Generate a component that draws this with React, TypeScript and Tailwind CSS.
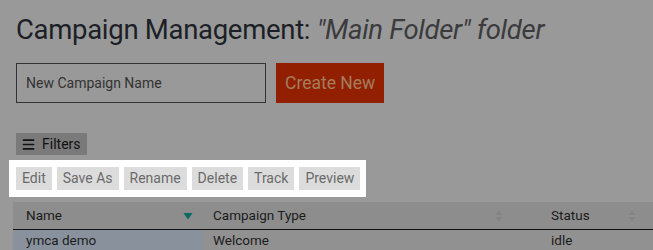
import { Menu } from 'lucide-react';

const actions = ['Edit', 'Save As', 'Rename', 'Delete', 'Track', 'Preview'];

function SortArrows() {
  return (
    <svg width="8" height="14" viewBox="0 0 8 14" className="shrink-0">
      <path d="M4 1 L7.5 6 L0.5 6 Z" fill="#848484" />
      <path d="M4 13 L7.5 8 L0.5 8 Z" fill="#848484" />
    </svg>
  );
}

export default function App() {
  return (
    <div
      className="w-[653px] h-[250px] overflow-hidden bg-[#999999] text-[#1c1f26]"
      style={{ fontFamily: 'Roboto, "Liberation Sans", sans-serif' }}
    >
      <h1 className="pl-4 pt-[13px] text-[27.5px] leading-[33px] tracking-[-0.3px]">
        Campaign Management:{' '}
        <span className="italic text-[#3b3b3d]">"Main Folder" folder</span>
      </h1>

      <div className="flex gap-[10px] pl-4 mt-[17px]">
        <div className="w-[250px] h-[40px] border border-[#333333] flex items-center px-[9px] text-[14px] text-[#333333]">
          New Campaign Name
        </div>
        <button className="h-[40px] px-[9px] bg-[#922000] text-[#a47d5e] text-[17.5px]">
          Create New
        </button>
      </div>

      <button className="ml-4 mt-[30px] h-[22px] pl-[5px] pr-[6px] flex items-center gap-[6px] bg-[#7a7a7a] text-[14px] text-[#111]">
        <Menu size={15} strokeWidth={2.75} />
        Filters
      </button>

      <div className="ml-[9px] mt-[5px] w-[357px] bg-white flex gap-[5px] px-[7px] py-[7px]">
        {actions.map((a) => (
          <span
            key={a}
            className="h-[23px] px-[6px] shrink-0 whitespace-nowrap flex items-center bg-[#dcdcdc] text-[14px] text-[#6a6a6a]"
          >
            {a}
          </span>
        ))}
      </div>

      <div className="ml-[13px] mt-[5px]">
        <div className="flex h-[28px] bg-[#8d8d8d] border-b border-[#111] text-[13.5px] text-[#1c1c1c]">
          <div className="w-[190px] flex items-center justify-between pl-[13px] pr-[10px]">
            <span>Name</span>
            <svg width="10" height="8" viewBox="0 0 10 8">
              <path d="M0.5 1 L9.5 1 L5 7.5 Z" fill="#0a6a62" />
            </svg>
          </div>
          <div className="w-[310px] flex items-center justify-between pl-[10px] pr-[10px]">
            <span>Campaign Type</span>
            <SortArrows />
          </div>
          <div className="w-[130px] flex items-center justify-between pl-[38px] pr-[7px]">
            <span>Status</span>
            <SortArrows />
          </div>
        </div>
        <div className="flex h-[21px] text-[13.5px] text-[#1c1c1c]">
          <div className="w-[190px] flex items-center pl-[13px] bg-[#89929c]">ymca demo</div>
          <div className="w-[310px] flex items-center pl-[10px] bg-[#919191]">Welcome</div>
          <div className="flex-1 flex items-center pl-[38px] bg-[#919191]">idle</div>
        </div>
      </div>
    </div>
  );
}
